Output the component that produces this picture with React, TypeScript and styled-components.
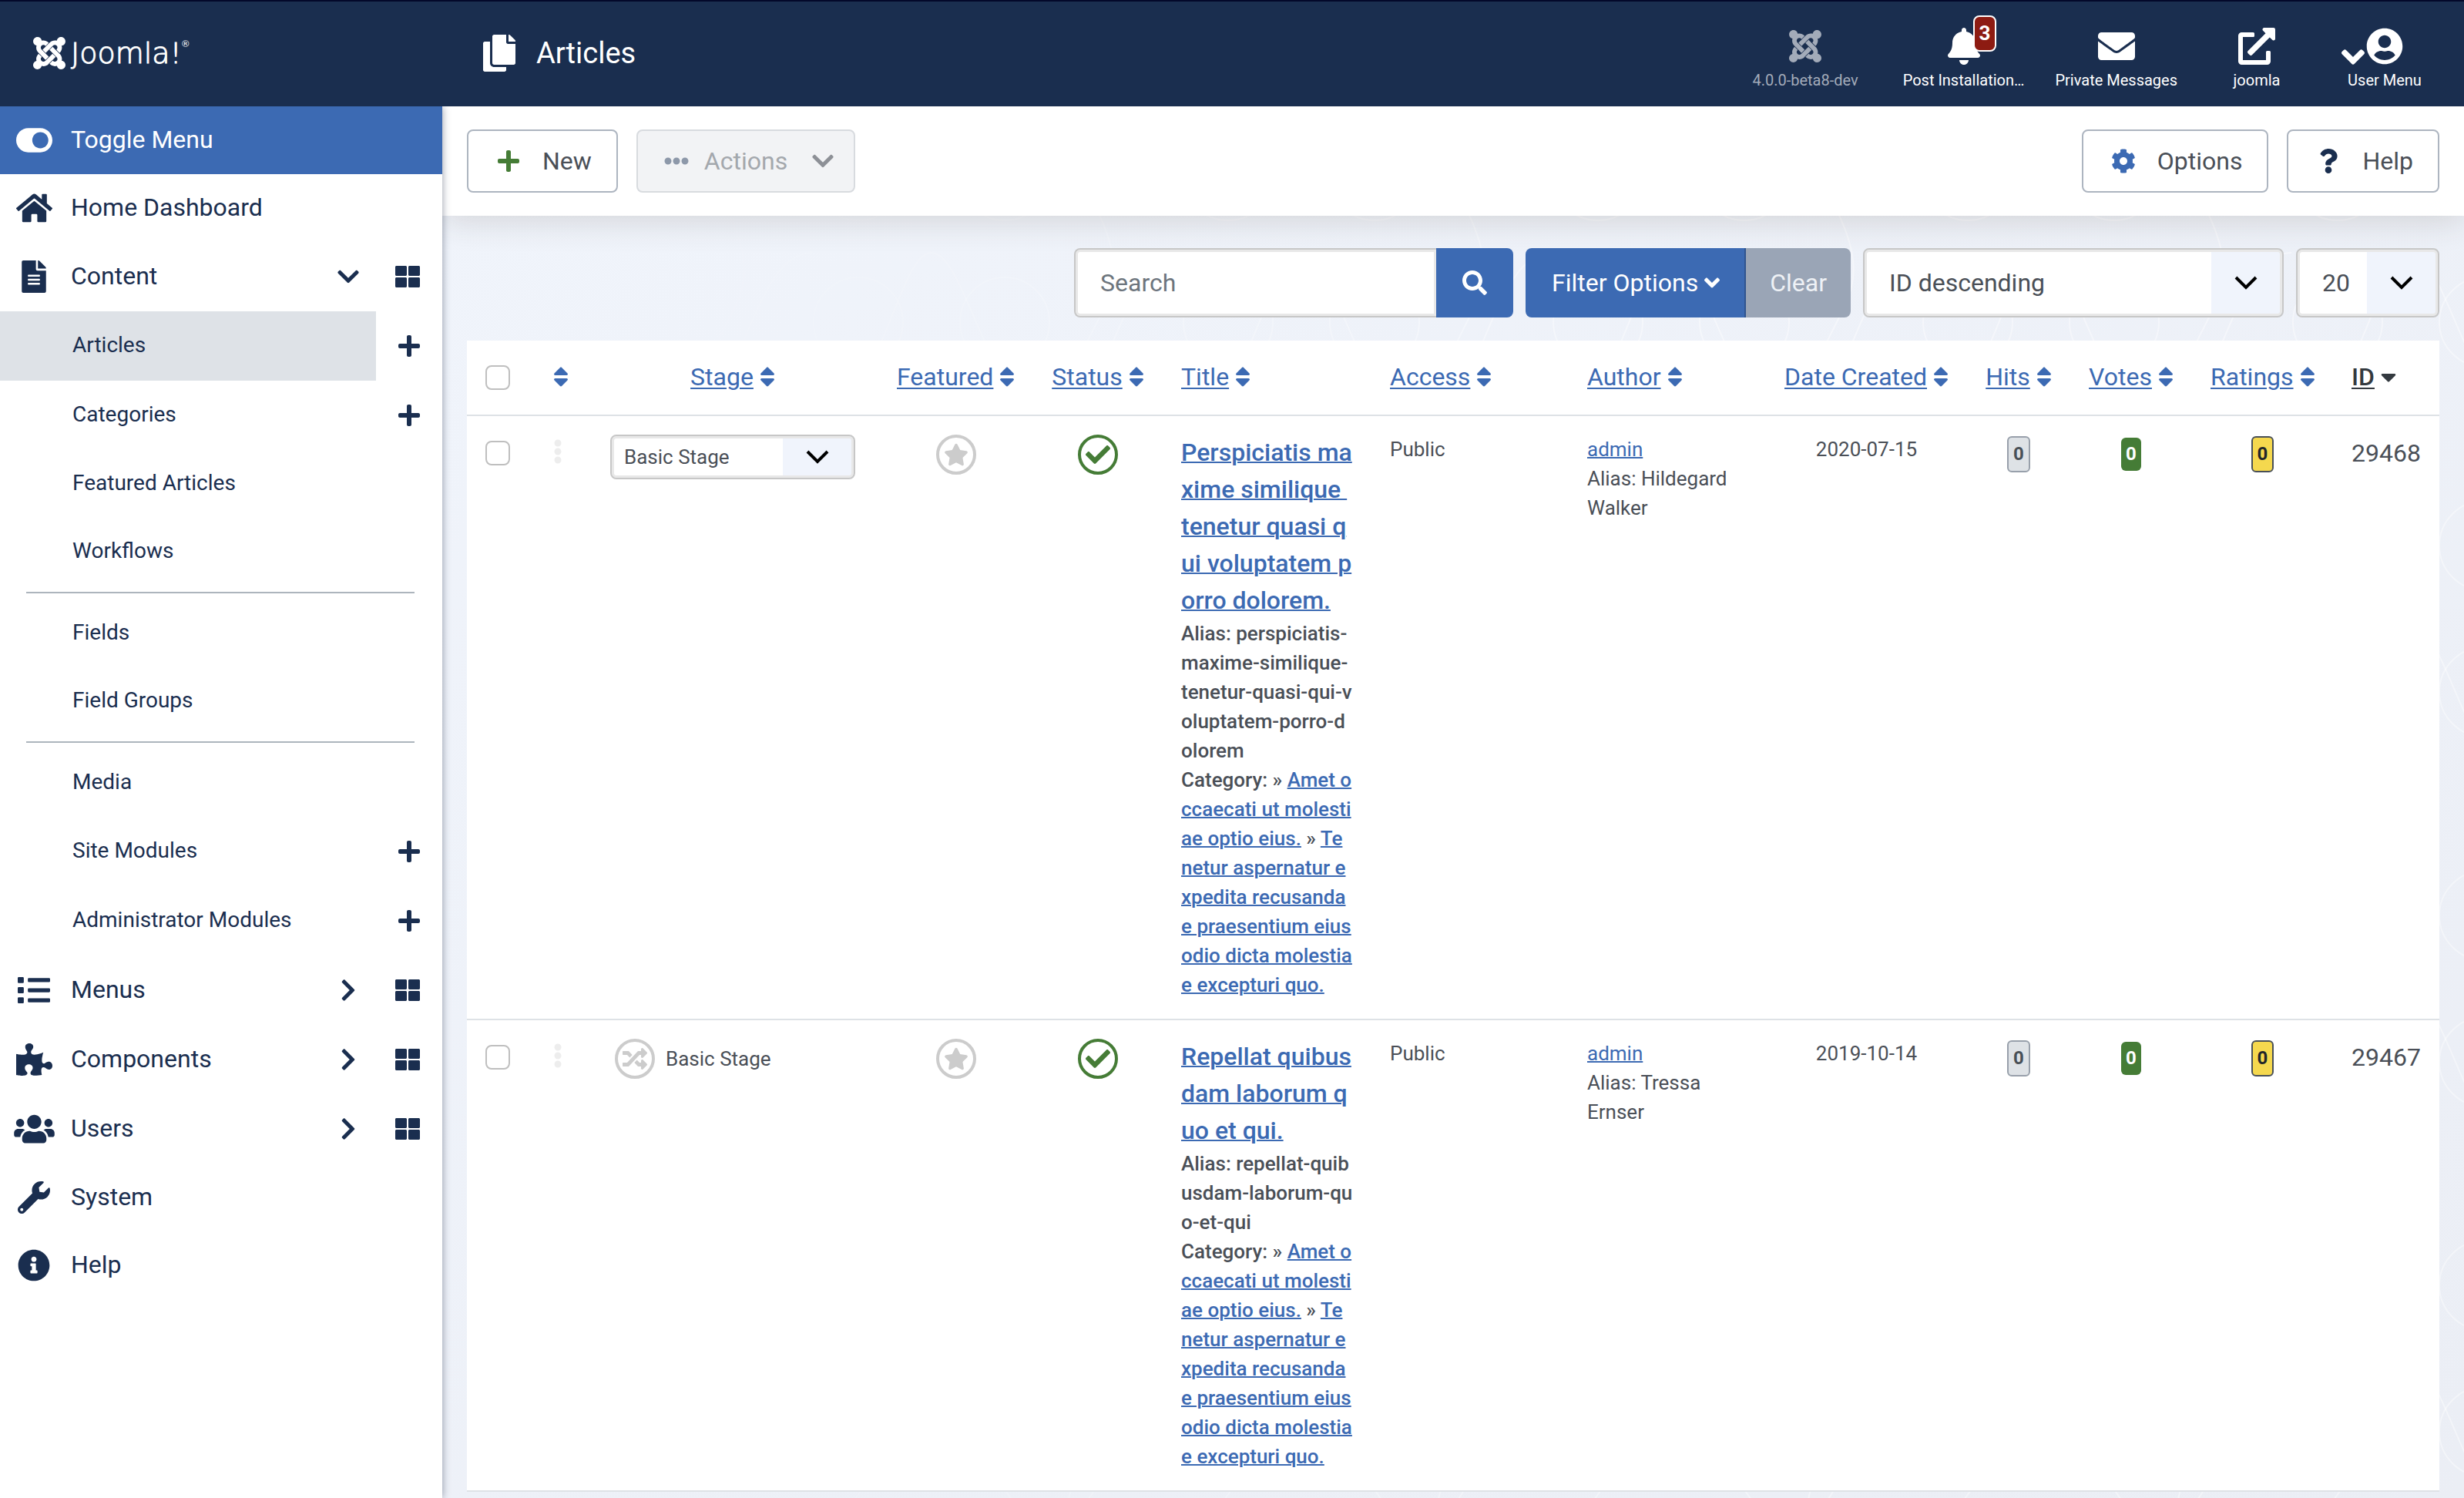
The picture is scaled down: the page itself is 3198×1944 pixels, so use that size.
import React from "react";
import styled, { createGlobalStyle, css } from "styled-components";
import {
  FaAngleDown, FaBell, FaCaretDown, FaCheck, FaChevronDown, FaChevronRight, FaCog, FaCopy,
  FaEllipsisH, FaEllipsisV, FaEnvelope, FaExternalLinkAlt, FaFileAlt, FaHome, FaInfoCircle,
  FaJoomla, FaList, FaPlus, FaPuzzlePiece, FaQuestion, FaRandom, FaSearch, FaSort, FaStar,
  FaThLarge, FaToggleOn, FaUserCircle, FaUsers, FaWrench,
} from "react-icons/fa";

const navy = "#1a2e4f";
const blue = "#3c6ab3";
const green = "#457c36";
const text = "#4a4f57";

const GlobalStyle = createGlobalStyle`
  *, *::before, *::after { box-sizing: border-box; }
  html, body { margin: 0; height: 100%; }
  body {
    overflow: hidden;
    background: #f0f4fb;
    color: ${text};
    font: 400 32px/48px Roboto, "Liberation Sans", sans-serif;
  }
  #root { height: 100%; }
  button, input, select { font: inherit; color: inherit; margin: 0; }
`;

const Page = styled.div`
  display: flex;
  flex-direction: column;
  height: 100%;
  overflow: hidden;
`;

/* $units is the glyph's width on the icon font's 512-unit grid. */
const Icon = styled.span<{ $size?: number; $units?: number; $color?: string }>`
  display: inline-flex;
  align-items: center;
  flex: none;
  color: ${(p) => p.$color || "inherit"};
  svg {
    display: block;
    width: ${(p) => Math.round(((p.$size || 32) * (p.$units || 512)) / 512)}px;
    height: ${(p) => p.$size || 32}px;
  }
`;

const Header = styled.header`
  display: flex;
  align-items: center;
  height: 138px;
  flex: none;
  padding: 0 20px 0 40px;
  box-shadow: inset 0 2px 0 #03082a;
  background: ${navy};
  color: #fff;
`;

const Brand = styled.a`
  display: flex;
  align-items: center;
  gap: 4px;
  width: 584px;
  color: #fff;
  text-decoration: none;
  font: 200 38px/40px "DejaVu Sans", Lato, sans-serif;
  -webkit-text-stroke: 1px currentColor;
`;

const Registered = styled.sup`
  align-self: flex-start;
  margin-left: -4px;
  font: 400 12px/24px Lato, Roboto, sans-serif;
  -webkit-text-stroke: 0;
`;

const PageTitle = styled.h1`
  display: flex;
  align-items: center;
  gap: 24px;
  margin: 0 auto 0 0;
  font-size: 38px;
  font-weight: 400;
`;

const HeaderLinks = styled.nav`
  display: flex;
  margin-top: 16px;
`;

const HeaderLink = styled.a<{ $muted?: boolean }>`
  display: flex;
  flex-direction: column;
  align-items: center;
  gap: 6px;
  min-width: 166px;
  padding: 0 20px;
  margin-right: ${(p) => (p.$muted ? 18 : 0)}px;
  color: ${(p) => (p.$muted ? "#a3abb9" : "#fff")};
  text-decoration: none;
  font-size: 20px;
  line-height: 28px;
`;

const HeaderIcon = styled.span`
  position: relative;
  display: flex;
  align-items: center;
  height: 48px;
`;

const Count = styled.span`
  position: absolute;
  left: 36px;
  top: -16px;
  padding: 0 6px;
  border: 2px solid #fff;
  border-radius: 8px;
  background: #8d1b12;
  font-size: 26px;
  font-weight: 700;
  line-height: 43px;
`;

const UserArrow = styled.span`
  position: absolute;
  right: 50px;
  top: 14px;
`;

const Body = styled.div`
  display: flex;
  flex: 1;
  min-height: 0;
`;

const Sidebar = styled.nav`
  position: relative;
  z-index: 1;
  width: 574px;
  flex: none;
  background: #fff;
  color: ${navy};
  box-shadow: 0 0 10px rgba(20, 30, 60, 0.45);
  clip-path: inset(0 -20px 0 0);
`;

const ToggleButton = styled.button`
  display: flex;
  align-items: center;
  width: 100%;
  height: 88px;
  padding: 0;
  border: 0;
  background: ${blue};
  color: #fff;
  text-align: left;
`;

const MenuRow = styled.div<{ $tall?: boolean }>`
  display: flex;
  align-items: center;
  height: ${(p) => (p.$tall ? 90 : 88)}px;
`;

const MenuIcon = styled(Icon)`
  justify-content: center;
  width: 88px;
  margin-right: 4px;
`;

const MenuLink = styled.a<{ $sub?: boolean; $active?: boolean }>`
  display: flex;
  align-items: center;
  width: 488px;
  height: 100%;
  padding-left: ${(p) => (p.$sub ? 94 : 0)}px;
  background: ${(p) => (p.$active ? "#dee2e7" : "transparent")};
  color: ${navy};
  text-decoration: none;
  font-size: ${(p) => (p.$sub ? 28 : 32)}px;
`;

const MenuLabel = styled.span`
  padding-bottom: 2px;
`;

const Arrow = styled.span`
  display: flex;
  justify-content: center;
  width: 28px;
  margin: 0 22px 0 auto;
`;

const MenuAction = styled.a`
  display: flex;
  justify-content: flex-end;
  width: 57px;
  color: ${navy};
`;

const Divider = styled.hr`
  height: 2px;
  margin: 8px 36px 8px 34px;
  border: 0;
  background: #adb5bd;
`;

const Main = styled.main`
  flex: 1;
  min-width: 0;
  position: relative;
  overflow: hidden;
`;

const Pattern = styled.svg`
  position: absolute;
  inset: 0;
  width: 100%;
  height: 100%;
`;

const Toolbar = styled.div`
  position: relative;
  display: flex;
  gap: 24px;
  padding: 30px 32px;
  background: #fff;
  box-shadow: 0 6px 40px rgba(60, 50, 40, 0.16);
`;

const ToolButton = styled.button<{ $push?: boolean }>`
  display: flex;
  align-items: center;
  gap: 28px;
  height: 82px;
  padding: 0 32px 0 36px;
  margin-left: ${(p) => (p.$push ? "auto" : 0)};
  border: 2px solid #adb5c0;
  border-radius: 8px;
  background: #fff;
  color: ${text};
  &:disabled {
    gap: 20px;
    padding: 0 24px 0 34px;
    border-color: #d8dbdf;
    background: #f2f3f5;
    color: #a4a8ad;
  }
`;

const ToolArrow = styled(Icon)`
  padding-left: 10px;
`;

const Content = styled.div`
  position: relative;
  padding: 42px 32px 0;
`;

const Filters = styled.form`
  display: flex;
  justify-content: flex-end;
  gap: 16px;
  margin-bottom: 30px;
`;

const Group = styled.div`
  display: flex;
`;

const fieldBox = css`
  border: 2px solid #c7c7c7;
  border-radius: 8px;
  background-color: #fff;
  box-shadow: inset 0 0 0 3px #e8e8e8;
`;

const SearchInput = styled.input`
  ${fieldBox}
  width: 470px;
  height: 90px;
  padding: 0 32px;
  border-right: 0;
  border-radius: 8px 0 0 8px;
  outline: 0;
  &::placeholder { color: #6d757d; opacity: 1; }
`;

const SolidButton = styled.button<{ $tone?: string; $side?: "left" | "right" }>`
  display: flex;
  align-items: center;
  gap: 8px;
  height: 90px;
  padding: 0 34px;
  border: 0;
  border-right: ${(p) => (p.$side === "left" ? "2px solid #30558f" : "0")};
  border-radius: ${(p) => (p.$side === "left" ? "8px 0 0 8px" : "0 8px 8px 0")};
  background: ${(p) => p.$tone || blue};
  color: #fff;
`;

const FilterButton = styled(SolidButton)`
  padding-right: 32px;
`;

const ClearButton = styled(SolidButton)`
  padding: 0 31px;
  color: #eef1f5;
`;

const arrowImage =
  "url(\"data:image/svg+xml,%3Csvg xmlns='http://www.w3.org/2000/svg' viewBox='0 0 30 18'%3E%3Cpath d='M2 2l13 13L28 2' fill='none' stroke='%23000' stroke-width='4'/%3E%3C/svg%3E\")";

const Select = styled.select<{ $width: number; $small?: boolean }>`
  ${fieldBox}
  appearance: none;
  width: ${(p) => p.$width}px;
  height: ${(p) => (p.$small ? 58 : 90)}px;
  padding: 0 96px 0 ${(p) => (p.$small ? 16 : 32)}px;
  font-size: ${(p) => (p.$small ? 26 : 32)}px;
  background-image: ${arrowImage}, linear-gradient(#f0f4fc, #f0f4fc);
  background-repeat: no-repeat;
  background-position: right 32px center, right 0 center;
  background-size: 30px 18px, 92px 100%;
`;

const Table = styled.table`
  width: 100%;
  table-layout: fixed;
  border-collapse: collapse;
  background: #fff;
`;

const Cell = styled.td<{ $center?: boolean; $small?: boolean }>`
  padding: 24px 24px;
  border-bottom: 2px solid #dee2e6;
  vertical-align: top;
  text-align: ${(p) => (p.$center ? "center" : "left")};
  font-weight: 400;
  ${(p) => p.$small && "font-size: 26px; line-height: 38px;"}
`;

const CheckCell = styled(Cell)`
  padding-top: 32px;
  line-height: 32px;
`;

const GripCell = styled(CheckCell)`
  padding-top: 30px;
`;

const StageCell = styled(Cell)`
  padding-left: 30px;
  padding-right: 30px;
`;

const Checkbox = styled.input`
  appearance: none;
  display: block;
  width: 32px;
  height: 32px;
  border: 2px solid #bfbfbf;
  border-radius: 8px;
  background: #fff;
`;

const Sort = styled.a<{ $on?: boolean }>`
  display: inline-flex;
  align-items: center;
  gap: 8px;
  height: 46px;
  vertical-align: top;
  color: ${(p) => (p.$on ? "#343a40" : blue)};
  font-weight: ${(p) => (p.$on ? 500 : 400)};
  text-decoration: none;
  white-space: nowrap;
  u { text-underline-offset: 3px; text-decoration-thickness: 2px; }
`;

const StageLine = styled.div`
  display: flex;
  align-items: center;
  gap: 14px;
  padding-left: 6px;
  font-size: 26px;
`;

const Round = styled.button<{ $color: string }>`
  display: inline-flex;
  align-items: center;
  justify-content: center;
  vertical-align: top;
  width: 52px;
  height: 52px;
  padding: 0;
  border: 4px solid ${(p) => p.$color};
  border-radius: 50%;
  background: #fff;
  color: ${(p) => p.$color};
  svg { display: block; width: 32px; height: 32px; }
`;

const TitleCell = styled(Cell)`
  padding-top: 23px;
  padding-bottom: 25px;
  white-space: pre;
  font-weight: 500;
`;

const Link = styled.a`
  color: ${blue};
  text-decoration: underline;
  text-decoration-thickness: 2px;
`;

const Detail = styled.div`
  font-size: 26px;
  line-height: 38px;
`;

const Badge = styled.span<{ $bg: string; $fg: string; $line?: string }>`
  display: inline-block;
  vertical-align: top;
  margin-top: ${(p) => (p.$line ? 2 : 4)}px;
  padding: 0 6px;
  border: ${(p) => (p.$line ? `2px solid ${p.$line}` : "0")};
  border-radius: 6px;
  background: ${(p) => p.$bg};
  color: ${(p) => p.$fg};
  font-size: 24px;
  font-weight: 700;
  line-height: 43px;
`;

type MenuEntry = {
  label: string;
  icon?: React.ReactNode;
  units?: number;
  arrow?: "down" | "right";
  action?: "grid" | "plus";
  active?: boolean;
};

const menu: (MenuEntry | null)[] = [
  { label: "Home Dashboard", icon: <FaHome />, units: 576 },
  { label: "Content", icon: <FaFileAlt />, units: 384, arrow: "down", action: "grid" },
  { label: "Articles", action: "plus", active: true },
  { label: "Categories", action: "plus" },
  { label: "Featured Articles" },
  { label: "Workflows" },
  null,
  { label: "Fields" },
  { label: "Field Groups" },
  null,
  { label: "Media" },
  { label: "Site Modules", action: "plus" },
  { label: "Administrator Modules", action: "plus" },
  { label: "Menus", icon: <FaList />, arrow: "right", action: "grid" },
  { label: "Components", icon: <FaPuzzlePiece />, units: 576, arrow: "right", action: "grid" },
  { label: "Users", icon: <FaUsers />, units: 640, arrow: "right", action: "grid" },
  { label: "System", icon: <FaWrench /> },
  { label: "Help", icon: <FaInfoCircle /> },
];

const columns: { label: string; width?: number; center?: boolean; on?: boolean }[] = [
  { label: "", width: 76, center: true },
  { label: "Stage", width: 378, center: true },
  { label: "Featured", width: 201, center: true },
  { label: "Status", width: 168, center: true },
  { label: "Title", width: 271 },
  { label: "Access" },
  { label: "Author" },
  { label: "Date Created", width: 261, center: true },
  { label: "Hits", width: 134, center: true },
  { label: "Votes", width: 158, center: true },
  { label: "Ratings", width: 183, center: true },
  { label: "ID", width: 138, on: true },
];

const parentCategory = "Amet o\nccaecati ut molesti\nae optio eius.";
const childCategory =
  "Te\nnetur aspernatur e\nxpedita recusanda\ne praesentium eius\nodio dicta molestia\ne excepturi quo.";

const articles = [
  {
    id: 29468,
    stageSelect: true,
    title: "Perspiciatis ma\nxime similique \ntenetur quasi q\nui voluptatem p\norro dolorem.",
    alias: "perspiciatis-\nmaxime-similique-\ntenetur-quasi-qui-v\noluptatem-porro-d\nolorem",
    author: "Alias: Hildegard Walker",
    date: "2020-07-15",
  },
  {
    id: 29467,
    stageSelect: false,
    title: "Repellat quibus\ndam laborum q\nuo et qui.",
    alias: "repellat-quib\nusdam-laborum-qu\no-et-qui",
    author: "Alias: Tressa Ernser",
    date: "2019-10-14",
  },
];

function BackgroundPattern() {
  return (
    <Pattern aria-hidden="true">
      <defs>
        <pattern id="rings" width="480" height="480" patternUnits="userSpaceOnUse">
          <g fill="none" stroke="#fff" strokeOpacity="0.4" strokeWidth="2">
            <circle cx="60" cy="90" r="58" />
            <circle cx="250" cy="90" r="58" />
            <circle cx="60" cy="280" r="58" />
            <circle cx="250" cy="280" r="58" />
            <path d="M0 400C90 400 110 190 155 190S230 400 310 400 400 190 480 190" />
            <path d="M360 0C300 90 430 160 380 260S300 400 380 480" />
          </g>
        </pattern>
        <linearGradient id="haze" x1="0" x2="1" y1="0" y2="1">
          <stop offset="0" stopColor="#f0f4fb" />
          <stop offset="1" stopColor="#ebeef5" />
        </linearGradient>
        <linearGradient id="fade">
          <stop offset="0.1" stopColor="#fff" stopOpacity="0.1" />
          <stop offset="0.6" stopColor="#fff" />
        </linearGradient>
        <mask id="ringMask">
          <rect width="100%" height="100%" fill="url(#fade)" />
        </mask>
      </defs>
      <rect width="100%" height="100%" fill="url(#haze)" />
      <rect width="100%" height="100%" fill="url(#rings)" mask="url(#ringMask)" />
    </Pattern>
  );
}

function MenuItem({ item }: { item: MenuEntry }) {
  return (
    <MenuRow $tall={!!item.action}>
      <MenuLink href="#" $sub={!item.icon} $active={item.active}>
        {item.icon && <MenuIcon $size={42} $units={item.units}>{item.icon}</MenuIcon>}
        <MenuLabel>{item.label}</MenuLabel>
        {item.arrow && (
          <Arrow>
            {item.arrow === "down" ? (
              <Icon $units={448}><FaChevronDown /></Icon>
            ) : (
              <Icon $units={320}><FaChevronRight /></Icon>
            )}
          </Arrow>
        )}
      </MenuLink>
      {item.action && (
        <MenuAction href="#" aria-label={`${item.label} shortcut`}>
          {item.action === "grid" ? (
            <Icon><FaThLarge /></Icon>
          ) : (
            <Icon $units={448}><FaPlus /></Icon>
          )}
        </MenuAction>
      )}
    </MenuRow>
  );
}

export default function App() {
  return (
    <Page>
      <GlobalStyle />
      <Header>
        <Brand href="#">
          <Icon $size={48}><FaJoomla /></Icon>
          Joomla!
          <Registered>®</Registered>
        </Brand>
        <PageTitle>
          <Icon $size={48}><FaCopy /></Icon>
          Articles
        </PageTitle>
        <HeaderLinks>
          <HeaderLink as="span" $muted>
            <HeaderIcon><Icon $size={48}><FaJoomla /></Icon></HeaderIcon>
            4.0.0-beta8-dev
          </HeaderLink>
          <HeaderLink href="#">
            <HeaderIcon>
              <Icon $size={48}><FaBell /></Icon>
              <Count>3</Count>
            </HeaderIcon>
            Post Installation…
          </HeaderLink>
          <HeaderLink href="#">
            <HeaderIcon><Icon $size={48}><FaEnvelope /></Icon></HeaderIcon>
            Private Messages
          </HeaderLink>
          <HeaderLink href="#">
            <HeaderIcon><Icon $size={48}><FaExternalLinkAlt /></Icon></HeaderIcon>
            joomla
          </HeaderLink>
          <HeaderLink href="#">
            <HeaderIcon>
              <UserArrow><Icon $size={48} $units={320}><FaAngleDown /></Icon></UserArrow>
              <Icon $size={48}><FaUserCircle /></Icon>
            </HeaderIcon>
            User Menu
          </HeaderLink>
        </HeaderLinks>
      </Header>
      <Body>
        <Sidebar>
          <ToggleButton type="button">
            <MenuIcon $size={42} $units={576}><FaToggleOn /></MenuIcon>
            <MenuLabel>Toggle Menu</MenuLabel>
          </ToggleButton>
          {menu.map((item, i) => (item ? <MenuItem key={i} item={item} /> : <Divider key={i} />))}
        </Sidebar>
        <Main>
          <BackgroundPattern />
          <Toolbar>
            <ToolButton type="button">
              <Icon $color={green}><FaPlus /></Icon>
              New
            </ToolButton>
            <ToolButton type="button" disabled>
              <Icon $color="#8d98a9"><FaEllipsisH /></Icon>
              Actions
              <ToolArrow $color="#8d9096"><FaChevronDown /></ToolArrow>
            </ToolButton>
            <ToolButton type="button" $push>
              <Icon $color={blue}><FaCog /></Icon>
              Options
            </ToolButton>
            <ToolButton type="button">
              <Icon $color={navy}><FaQuestion /></Icon>
              Help
            </ToolButton>
          </Toolbar>
          <Content>
            <Filters onSubmit={(e) => e.preventDefault()}>
              <Group>
                <SearchInput type="text" placeholder="Search" aria-label="Search" />
                <SolidButton type="submit" aria-label="Search"><Icon><FaSearch /></Icon></SolidButton>
              </Group>
              <Group>
                <FilterButton type="button" $side="left">
                  Filter Options
                  <Icon $units={320}><FaAngleDown /></Icon>
                </FilterButton>
                <ClearButton type="button" $tone="#9aa5b6">Clear</ClearButton>
              </Group>
              <Select $width={546} aria-label="Sort table by">
                <option>ID descending</option>
              </Select>
              <Select $width={186} aria-label="Items per page">
                <option>20</option>
              </Select>
            </Filters>
            <Table>
              <colgroup>
                <col style={{ width: 80 }} />
                {columns.map((c) => (
                  <col key={c.label} style={{ width: c.width }} />
                ))}
              </colgroup>
              <thead>
                <tr>
                  <CheckCell as="th"><Checkbox type="checkbox" aria-label="Check all items" /></CheckCell>
                  {columns.map((c) => (
                    <Cell as="th" key={c.label} $center={c.center}>
                      <Sort href="#" $on={c.on} aria-label={c.label || "Ordering"}>
                        <u>{c.label}</u>
                        <Icon $units={320}>{c.on ? <FaCaretDown /> : <FaSort />}</Icon>
                      </Sort>
                    </Cell>
                  ))}
                </tr>
              </thead>
              <tbody>
                {articles.map((a) => (
                  <tr key={a.id}>
                    <CheckCell><Checkbox type="checkbox" aria-label={`Select ${a.id}`} /></CheckCell>
                    <GripCell $center>
                      <Icon $color="#ededed" $units={192}><FaEllipsisV /></Icon>
                    </GripCell>
                    <StageCell>
                      {a.stageSelect ? (
                        <Select $small $width={318} aria-label="Stage">
                          <option>Basic Stage</option>
                        </Select>
                      ) : (
                        <StageLine>
                          <Round type="button" $color="#cccccc" aria-label="Change stage"><FaRandom /></Round>
                          Basic Stage
                        </StageLine>
                      )}
                    </StageCell>
                    <Cell $center>
                      <Round type="button" $color="#cccccc" aria-label="Toggle featured"><FaStar /></Round>
                    </Cell>
                    <Cell $center>
                      <Round type="button" $color={green} aria-label="Published"><FaCheck /></Round>
                    </Cell>
                    <TitleCell as="th" scope="row">
                      <Link href="#">{a.title}</Link>
                      <Detail>{"Alias: " + a.alias}</Detail>
                      <Detail>
                        {"Category: » "}
                        <Link href="#">{parentCategory}</Link>
                        {" » "}
                        <Link href="#">{childCategory}</Link>
                      </Detail>
                    </TitleCell>
                    <Cell $small>Public</Cell>
                    <Cell $small>
                      <Link href="#">admin</Link>
                      <div>{a.author}</div>
                    </Cell>
                    <Cell $small $center>{a.date}</Cell>
                    <Cell $center><Badge $bg="#dee2e6" $fg="#495057" $line="#98a0ab">0</Badge></Cell>
                    <Cell $center><Badge $bg={green} $fg="#fff">0</Badge></Cell>
                    <Cell $center><Badge $bg="#f5d84e" $fg="#212529" $line="#495057">0</Badge></Cell>
                    <Cell>{a.id}</Cell>
                  </tr>
                ))}
              </tbody>
            </Table>
          </Content>
        </Main>
      </Body>
    </Page>
  );
}
